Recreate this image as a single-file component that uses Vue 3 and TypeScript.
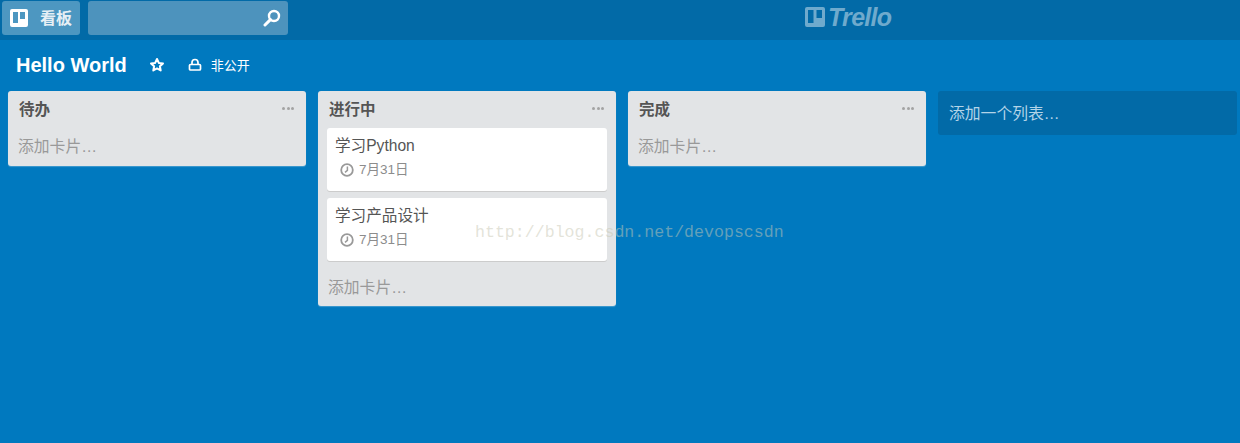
<script setup lang="ts">
interface Card { title: string; due: string }
interface List { name: string; cards: Card[] }
const lists: List[] = [
  { name: '待办', cards: [] },
  { name: '进行中', cards: [
    { title: '学习Python', due: '7月31日' },
    { title: '学习产品设计', due: '7月31日' },
  ] },
  { name: '完成', cards: [] },
]
</script>

<template>
  <div class="page">
    <header class="topbar">
      <div class="left">
        <button class="boards">
          <svg class="boards-icon" width="18" height="18" viewBox="0 0 18 18">
            <path fill="#fff" fill-rule="evenodd" d="M2 0h14a2 2 0 0 1 2 2v14a2 2 0 0 1-2 2H2a2 2 0 0 1-2-2V2a2 2 0 0 1 2-2zM3 3v11h5V3zm7 0v7h5V3z" />
          </svg>
          <span>看板</span>
        </button>
        <div class="search">
          <svg width="18" height="18" viewBox="0 0 18 18">
            <circle cx="11" cy="7" r="5" fill="none" stroke="#fff" stroke-width="2.4" />
            <path d="M7.4 10.6 2 16" stroke="#fff" stroke-width="3" stroke-linecap="round" />
          </svg>
        </div>
      </div>
      <div class="logo">
        <svg width="20" height="20" viewBox="0 0 20 20">
          <path fill="#6faacd" fill-rule="evenodd" d="M2 0h16a2 2 0 0 1 2 2v16a2 2 0 0 1-2 2H2a2 2 0 0 1-2-2V2a2 2 0 0 1 2-2zM3 3v13h5.500V3zm8.500 0v8H17V3z" />
        </svg>
        <span class="wordmark">Trello</span>
      </div>
    </header>

    <div class="board-head">
      <h1>Hello World</h1>
      <svg class="star" width="16" height="16" viewBox="0 0 16 16">
        <path d="M8 2 9.800 5.900l4.200.5-3.100 2.900.8 4.200L8 11.400l-3.700 2.100.8-4.200L2 6.400l4.200-.5z" fill="none" stroke="#fff" stroke-width="2" stroke-linejoin="round" />
      </svg>
      <svg class="lock" width="14" height="14" viewBox="0 0 14 14">
        <path d="M4 6.500V4.500a3 3 0 0 1 6 0v2" fill="none" stroke="#fff" stroke-width="1.700" />
        <rect x="1.500" y="6.500" width="11" height="5.500" rx="1" fill="none" stroke="#fff" stroke-width="1.700" />
      </svg>
      <span class="visibility">非公开</span>
    </div>

    <main class="lists">
      <section v-for="list in lists" :key="list.name" class="list">
        <div class="list-head">
          <h2>{{ list.name }}</h2>
          <span class="more"><i></i><i></i><i></i></span>
        </div>
        <article v-for="card in list.cards" :key="card.title" class="card">
          <div class="card-title">{{ card.title }}</div>
          <div class="due">
            <svg width="14" height="14" viewBox="0 0 14 14">
              <circle cx="7" cy="7" r="5.800" fill="none" stroke="#999" stroke-width="1.800" />
              <path d="M7.400 3.600V7.400L5 9.400" fill="none" stroke="#999" stroke-width="1.500" />
            </svg>
            <span>{{ card.due }}</span>
          </div>
        </article>
        <div class="add-card" :class="{ 'after-cards': list.cards.length }">添加卡片…</div>
      </section>
      <div class="add-list">添加一个列表…</div>
    </main>

    <div class="watermark">http://blog.csdn.net/devopscsdn</div>
  </div>
</template>

<style>
html, body { margin: 0; }
</style>

<style scoped>
.page {
  position: relative;
  width: 1240px;
  height: 443px;
  overflow: hidden;
  background: #0079bf;
  font-family: "Liberation Sans", "Noto Sans CJK SC", sans-serif;
}
.topbar {
  position: relative;
  height: 40px;
  background: #026aa7;
  display: flex;
  align-items: flex-start;
  padding-top: 1px;
  box-sizing: border-box;
}
.left { display: flex; gap: 8px; }
.boards {
  margin-left: 2px;
  width: 78px;
  height: 34px;
  border: 0;
  border-radius: 3px;
  background: #4d97c1;
  color: #e6eff5;
  font: bold 16px "Liberation Sans", "Noto Sans CJK SC", sans-serif;
  display: flex;
  align-items: center;
  padding: 0 0 3px 8px;
  gap: 12px;
}
.boards-icon { flex: none; margin-top: 3px; }
.search {
  width: 200px;
  height: 34px;
  border-radius: 3px;
  background: #4d93bd;
  display: flex;
  align-items: center;
  justify-content: flex-end;
  padding-right: 7px;
  box-sizing: border-box;
}
.logo {
  position: absolute;
  left: 805px;
  top: 7px;
  display: flex;
  align-items: center;
  gap: 3px;
}
.wordmark {
  font-family: "Liberation Sans", sans-serif;
  font-style: italic;
  font-weight: bold;
  font-size: 25px;
  line-height: 20px;
  letter-spacing: -0.7px;
  color: #6faacd;
}
.board-head {
  height: 51px;
  display: flex;
  align-items: center;
  padding-left: 16px;
  color: #fff;
  box-sizing: border-box;
  padding-bottom: 2px;
}
h1 {
  margin: 0;
  font-size: 20px;
  font-weight: bold;
  line-height: 24px;
}
.star { margin-left: 22px; }
.lock { margin-left: 23px; }
.visibility { margin-left: 9px; font-size: 13px; }
.lists {
  display: flex;
  align-items: flex-start;
  gap: 12px;
  padding-left: 8px;
}
.list {
  width: 298px;
  box-sizing: border-box;
  background: #e2e4e6;
  border-radius: 3px;
  padding: 0 9px;
  box-shadow: 0 1px 1px rgba(255, 255, 255, 0.25);
}
.list-head {
  height: 37px;
  display: flex;
  align-items: center;
  justify-content: space-between;
  padding: 0 1px 0 2px;
}
h2 {
  margin: 0;
  font-size: 15.500px;
  font-weight: bold;
  color: #555;
  line-height: 39px;
}
.more { display: flex; gap: 1.500px; margin-right: 2px; margin-bottom: 3px; }
.more i { width: 3px; height: 3px; border-radius: 50%; background: #a3a3a3; }
.card {
  height: 63px;
  margin-bottom: 7px;
  background: #fff;
  border-radius: 3px;
  padding: 9px 8px 0 8px;
  box-sizing: border-box;
  color: #555;
  box-shadow: 0 1px 0 #ccc;
}
.card-title { font-size: 15.600px; line-height: 18px; }
.due {
  display: flex;
  align-items: center;
  gap: 5px;
  margin-top: 6px;
  padding-left: 5px;
  color: #8c8c8c;
  font-size: 13.500px;
  line-height: 18px;
}
.add-card {
  height: 37.500px;
  margin-left: 1px;
  color: #999;
  font-size: 15.800px;
  line-height: 38px;
}
.add-card.after-cards { height: 38px; line-height: 40px; }
.add-list {
  width: 299px;
  height: 44px;
  box-sizing: border-box;
  padding-left: 11px;
  background: #026aa7;
  border-radius: 3px;
  color: #b3d4e7;
  font-size: 15.800px;
  line-height: 45px;
}
.watermark {
  position: absolute;
  left: 475px;
  top: 223px;
  font-family: "Liberation Mono", monospace;
  font-size: 16.600px;
  line-height: 20px;
  white-space: nowrap;
  color: rgba(200, 200, 180, 0.5);
}
</style>
